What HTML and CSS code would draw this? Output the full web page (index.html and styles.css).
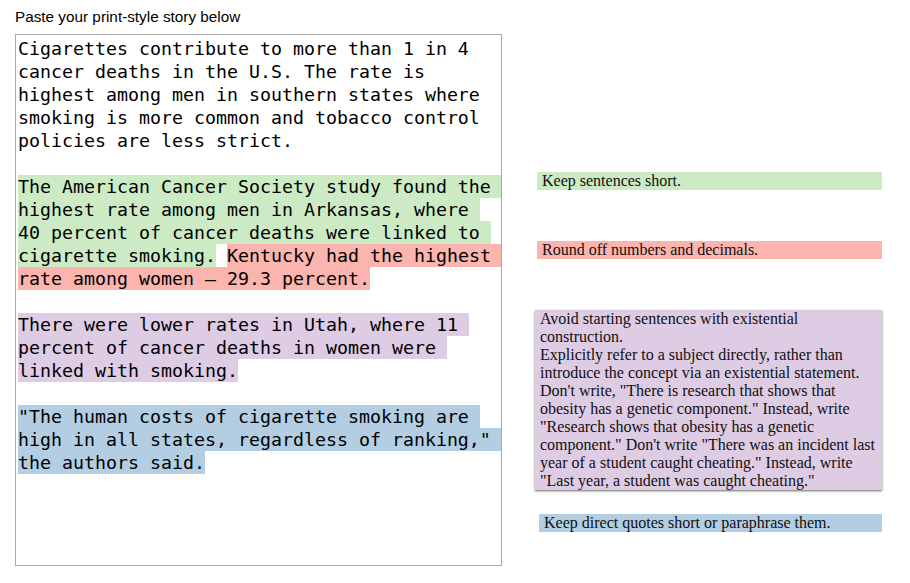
FILE: index.html
```html
<!DOCTYPE html>
<html lang="en">
<head>
<meta charset="utf-8">
<title>Story style checker</title>
<link rel="stylesheet" href="styles.css">
</head>
<body>
<div class="page">
  <div class="editor-col">
    <div class="label">Paste your print-style story below</div>
    <div class="story" contenteditable="true">Cigarettes contribute to more than 1 in 4 cancer deaths in the U.S. The rate is highest among men in southern states where smoking is more common and tobacco control policies are less strict.

<span class="hl hl-green">The American Cancer Society study found the highest rate among men in Arkansas, where 40 percent of cancer deaths were linked to cigarette smoking.</span> <span class="hl hl-red">Kentucky had the highest rate among women — 29.3 percent.</span>

<span class="hl hl-purple">There were lower rates in Utah, where 11 percent of cancer deaths in women were linked with smoking.</span>

<span class="hl hl-blue">"The human costs of cigarette smoking are high in all states, regardless of ranking," the authors said.</span></div>
  </div>
  <div class="notes">
    <div class="note note-green">Keep sentences short.</div>
    <div class="note note-red">Round off numbers and decimals.</div>
    <div class="note note-purple">Avoid starting sentences with existential construction.<br>Explicitly refer to a subject directly, rather than introduce the concept via an existential statement. Don't write, "There is research that shows that obesity has a genetic component." Instead, write "Research shows that obesity has a genetic component." Don't write "There was an incident last year of a student caught cheating." Instead, write "Last year, a student was caught cheating."</div>
    <div class="note note-blue">Keep direct quotes short or paraphrase them.</div>
  </div>
</div>
</body>
</html>
```

FILE: styles.css
```css
html, body {
  margin: 0;
  padding: 0;
  background: #ffffff;
}

.page {
  display: flex;
  align-items: flex-start;
  gap: 33px;
  padding: 8px 15px;
}

.editor-col {
  display: flex;
  flex-direction: column;
  width: 487px;
  flex: none;
}

.label {
  font-family: "Liberation Sans", Arial, sans-serif;
  font-size: 15.3px;
  line-height: 18px;
  color: #000;
  margin-bottom: 8px;
}

.story {
  box-sizing: border-box;
  width: 487px;
  height: 532px;
  border: 1px solid #a9a9a9;
  padding: 2px;
  font-family: "DejaVu Sans Mono", "Liberation Mono", monospace;
  font-size: 18.27px;
  line-height: 23px;
  color: #000;
  white-space: pre-wrap;
  overflow: hidden;
  outline: none;
}

.hl {
  padding: 1px 0;
}

.hl-green { background: #ccebc5; }
.hl-red { background: #fbb4ae; }
.hl-purple { background: #decbe4; }
.hl-blue { background: #b3cde3; }

.notes {
  display: flex;
  flex-direction: column;
  width: 347px;
  flex: none;
  padding-top: 164px;
}

.note {
  box-sizing: border-box;
  font-family: "Liberation Serif", "Times New Roman", serif;
  font-size: 16px;
  line-height: 18px;
  color: #111;
  padding: 0 5px;
}

.note-green {
  background: #ccebc5;
  margin-left: 2px;
}

.note-red {
  background: #fbb4ae;
  margin-left: 2px;
  margin-top: 51px;
}

.note-purple {
  background: #decbe4;
  margin-top: 51px;
  box-shadow: 0 1px 2px rgba(0, 0, 0, 0.6);
}

.note-blue {
  background: #b3cde3;
  margin-left: 4px;
  margin-top: 24px;
}
```
